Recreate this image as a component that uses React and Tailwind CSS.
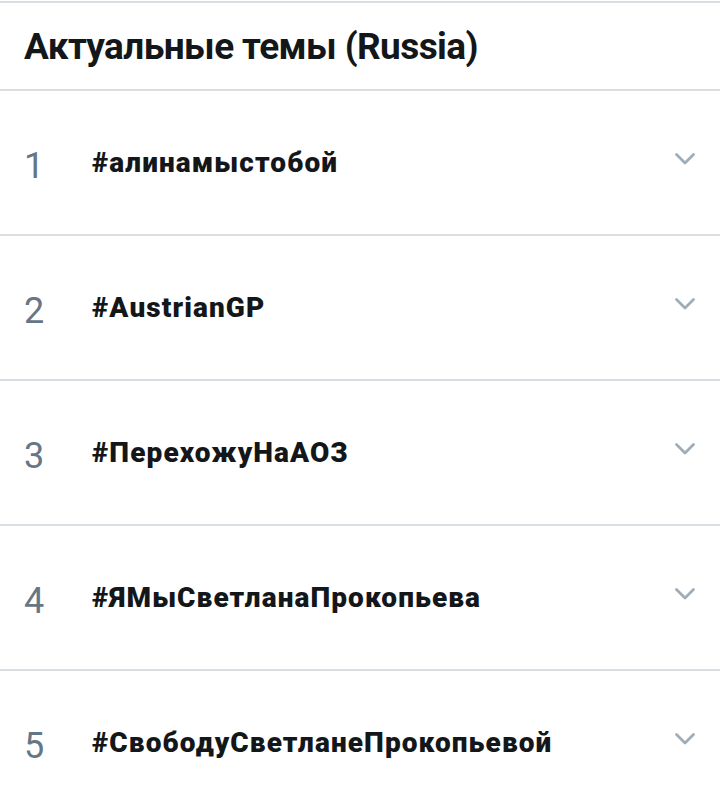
import React from "react";

const trends = [
  "#алинамыстобой",
  "#AustrianGP",
  "#ПерехожуНаАОЗ",
  "#ЯМыСветланаПрокопьева",
  "#СвободуСветланеПрокопьевой",
];

function Chevron() {
  return (
    <svg width="22" height="14" viewBox="0 0 22 14" fill="none">
      <path d="M2.5 2.5l8.5 8.5 8.5-8.5" stroke="#9fadb8" strokeWidth="2.8" strokeLinecap="round" strokeLinejoin="round" />
    </svg>
  );
}

export default function App() {
  return (
    <div className="w-[720px] h-[810px] overflow-hidden bg-white text-[#14171a]" style={{ fontFamily: "Roboto, 'Noto Sans', sans-serif" }}>
      <div className="border-t-2 border-[#d8dee2] mt-px" />
      <div className="h-[88px] flex items-center px-6 border-b-2 border-[#d8dee2]">
        <h1 className="text-[37px] font-bold tracking-[-0.6px] leading-none">Актуальные темы (Russia)</h1>
      </div>
      {trends.map((tag, i) => (
        <div key={i} className="h-[145px] flex items-start border-b-2 border-[#d8dee2]">
          <div className="w-[92px] pl-6 pt-[57px] text-[36px] text-[#657786] leading-none">{i + 1}</div>
          <div className="flex-1 pt-[58px] text-[28px] font-black leading-none tracking-[1.1px]">{tag}</div>
          <div className="pr-6 pt-[61px]">
            <Chevron />
          </div>
        </div>
      ))}
    </div>
  );
}
